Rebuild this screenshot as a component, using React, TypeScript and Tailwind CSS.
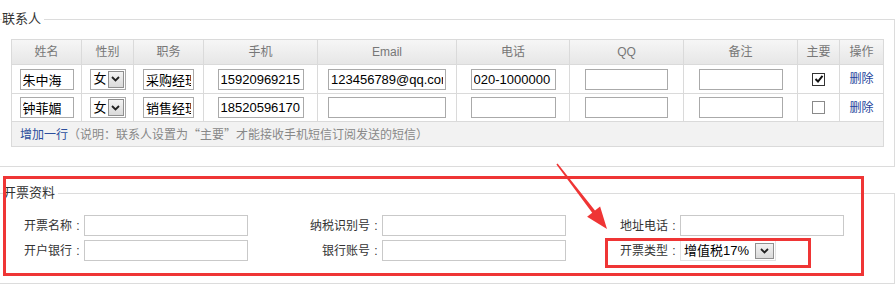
import React from "react"

const cols = [70, 52, 70, 114, 139, 113, 114, 114, 42, 44]
const heads = ["姓名", "性别", "职务", "手机", "Email", "电话", "QQ", "备注", "主要", "操作"]

interface Contact {
  name: string
  sex: string
  job: string
  mobile: string
  email: string
  phone: string
  main: boolean
}

const contacts: Contact[] = [
  { name: "朱中海", sex: "女", job: "采购经理", mobile: "15920969215", email: "123456789@qq.com", phone: "020-1000000", main: true },
  { name: "钟菲媚", sex: "女", job: "销售经理", mobile: "18520596170", email: "", phone: "", main: false },
]

function Chevron() {
  return (
    <svg width="9" height="6" viewBox="0 0 9 6">
      <path d="M1 1 L4.5 4.5 L8 1" fill="none" stroke="#222" strokeWidth="1.8" />
    </svg>
  )
}

function Field({ value, w }: { value: string; w: string }) {
  return (
    <input
      readOnly
      defaultValue={value}
      className={`${w} h-[21px] border border-[#aaaaaa] bg-white px-[2px] text-[13px] leading-[19px] text-black outline-none`}
    />
  )
}

function Sex({ value }: { value: string }) {
  return (
    <div className="mx-auto flex h-[21px] w-[36px] items-center justify-between border border-[#aaaaaa] bg-white pl-[3px] pr-[1px] text-[13px] text-black">
      <span>{value}</span>
      <span className="flex h-[17px] w-[16px] items-center justify-center border border-[#8f8f8f] bg-gradient-to-b from-[#f4f4f4] to-[#dadada]">
        <Chevron />
      </span>
    </div>
  )
}

function Check({ on }: { on: boolean }) {
  return (
    <span
      className={`mx-auto flex h-[13px] w-[13px] items-center justify-center border bg-white ${
        on ? "border-[#333]" : "border-[#8a8a8a]"
      }`}
    >
      {on && (
        <svg width="10" height="10" viewBox="0 0 10 10">
          <path d="M1.5 5 L4 7.5 L8.5 1.8" fill="none" stroke="#111" strokeWidth="2" />
        </svg>
      )}
    </span>
  )
}

// 标签：文字右对齐，冒号单独居中
function Label({ text }: { text: string }) {
  return (
    <span className="text-right">
      {text}
      <span className="inline-block w-[12px] text-center">:</span>
    </span>
  )
}

function Box() {
  return <div className="h-[21px] border border-[#c9c9c9] bg-white" />
}

export default function App() {
  return (
    <div className="relative h-[285px] w-[896px] overflow-hidden bg-white font-['Liberation_Sans','Noto_Sans_CJK_SC',sans-serif] text-[#333]">
      {/* 联系人 */}
      <fieldset className="mt-[11px] w-[895px] border border-l-0 border-[#dcdcdc] px-0 pb-[19px] pt-[12px]">
        <legend className="ml-[2px] pr-[3px] text-[13px] leading-[16px] text-[#333]">联系人</legend>
        <table className="ml-[11px] w-[872px] table-fixed border-collapse border border-[#dadada] text-[12px]">
          <colgroup>
            {cols.map((w, i) => (
              <col key={i} style={{ width: w }} />
            ))}
          </colgroup>
          <thead>
            <tr className="h-[25px] bg-gradient-to-b from-[#f6f6f6] to-[#e6e6e6]">
              {heads.map((h) => (
                <th key={h} className="border border-[#dadada] p-0 text-center font-normal text-[#777]">
                  {h}
                </th>
              ))}
            </tr>
          </thead>
          <tbody>
            {contacts.map((c, i) => (
              <tr key={i} className={`${i === 0 ? "h-[29px]" : "h-[28px]"} bg-white`}>
                <td className="border border-[#dadada] p-0 text-center">
                  <Field value={c.name} w="w-[54px]" />
                </td>
                <td className="border border-[#dadada] p-0">
                  <Sex value={c.sex} />
                </td>
                <td className="border border-[#dadada] p-0 text-center">
                  <Field value={c.job} w="w-[51px]" />
                </td>
                <td className="border border-[#dadada] p-0 text-center">
                  <Field value={c.mobile} w="w-[86px]" />
                </td>
                <td className="border border-[#dadada] p-0 text-center">
                  <Field value={c.email} w="w-[118px]" />
                </td>
                <td className="border border-[#dadada] p-0 text-center">
                  <Field value={c.phone} w="w-[85px]" />
                </td>
                <td className="border border-[#dadada] p-0 text-center">
                  <Field value="" w="w-[83px]" />
                </td>
                <td className="border border-[#dadada] p-0 text-center">
                  <Field value="" w="w-[84px]" />
                </td>
                <td className="border border-[#dadada] p-0">
                  <Check on={c.main} />
                </td>
                <td className="border border-[#dadada] p-0 text-center text-[12px] text-[#24439a]">删除</td>
              </tr>
            ))}
            <tr className="h-[25px] bg-[#f2f2f2]">
              <td colSpan={10} className="border border-[#dadada] py-0 pl-[8px] font-['Noto_Sans_CJK_SC',sans-serif] text-[12px] text-[#888]">
                <span className="text-[#2b4e9c]">增加一行</span>（说明：联系人设置为“主要”才能接收手机短信订阅发送的短信）
              </td>
            </tr>
          </tbody>
        </table>
      </fieldset>

      {/* 开票资料 */}
      <fieldset className="mt-[18px] w-[895px] border border-l-0 border-[#dcdcdc] px-0 pb-[22px] pt-[14px]">
        <legend className="ml-[3px] pr-[3px] text-[13px] leading-[16px] text-[#333]">开票资料</legend>
        <div className="grid grid-cols-[84px_164px_134px_184px_114px_164px] items-center gap-y-[4px] text-[12px] text-[#333]">
          <Label text="开票名称" />
          <Box />
          <Label text="纳税识别号" />
          <Box />
          <Label text="地址电话" />
          <Box />

          <Label text="开户银行" />
          <Box />
          <Label text="银行账号" />
          <Box />
          <Label text="开票类型" />
          <div className="flex h-[21px] w-[96px] items-center justify-between border border-[#e2e2e2] bg-white pl-[3px] pr-[1px] text-[13px] text-black">
            <span>增值税17%</span>
            <span className="flex h-[16px] w-[19px] items-center justify-center border border-[#8f8f8f] bg-gradient-to-b from-[#f2f2f2] to-[#dadada]">
              <Chevron />
            </span>
          </div>
        </div>
      </fieldset>

      {/* 标注 */}
      <div className="pointer-events-none absolute left-[3px] top-[176px] h-[100px] w-[861px] border-[3px] border-[#ef3535]" />
      <div className="pointer-events-none absolute left-[605px] top-[238px] h-[30px] w-[206px] border-[3px] border-[#ef3535]" />
      <svg className="pointer-events-none absolute left-0 top-0" width="896" height="285">
        <polygon
          points="556.4,164.4 592.2,212.7 587.1,216.8 607,229 600.1,206.5 595,210.5 557.6,163.6"
          fill="#ef3535"
        />
      </svg>
    </div>
  )
}
